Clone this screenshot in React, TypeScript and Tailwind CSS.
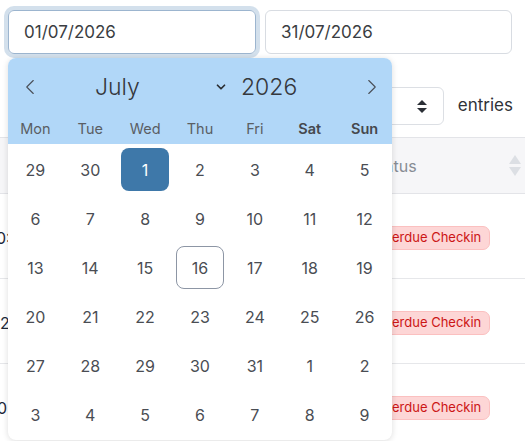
import { ChevronDown, ChevronLeft, ChevronRight } from "lucide-react"

const weekdays = ["Mon", "Tue", "Wed", "Thu", "Fri", "Sat", "Sun"]

// July 2026 grid, Monday first, padded with June / August days
const days = [
  29, 30, 1, 2, 3, 4, 5,
  6, 7, 8, 9, 10, 11, 12,
  13, 14, 15, 16, 17, 18, 19,
  20, 21, 22, 23, 24, 25, 26,
  27, 28, 29, 30, 31, 1, 2,
  3, 4, 5, 6, 7, 8, 9,
]

const rows = [
  { lead: "0:", shift: "-ml-[4px]" },
  { lead: "2", shift: "ml-0" },
  { lead: "0", shift: "-ml-[3px]" },
]

function SortArrows() {
  return (
    <svg width="12" height="22" viewBox="0 0 12 22">
      <path d="M6 0 L12 9 L0 9 Z" fill="#dcdfe4" />
      <path d="M6 21 L12 12 L0 12 Z" fill="#dcdfe4" />
    </svg>
  )
}

function SelectArrows() {
  return (
    <svg width="10" height="13" viewBox="0 0 10 13">
      <path d="M5 0 L10 5 L0 5 Z" fill="#2b2f36" />
      <path d="M5 13 L10 8 L0 8 Z" fill="#2b2f36" />
    </svg>
  )
}

function Calendar() {
  return (
    <div className="absolute left-[8px] top-[58px] w-[384px] h-[382px] rounded-[8px] bg-white shadow-[0_1px_6px_rgba(0,0,0,0.14)]">
      <div className="h-[86px] rounded-t-[8px] bg-[#b1d7f8]">
        <div className="flex items-center h-[58px]">
          <button className="w-[44px] flex justify-center text-[#4a4f57]">
            <ChevronLeft className="w-[26px] h-[26px]" strokeWidth={1} />
          </button>
          <div className="flex items-center w-[178px] pl-[43px] pr-[2px]">
            <span className="text-[23px] font-light text-[#35383d]">July</span>
            <ChevronDown className="ml-auto w-[14px] h-[14px] text-[#2b2e33]" strokeWidth={3} />
          </div>
          <span className="ml-[11px] text-[23px] font-light text-[#35383d]">2026</span>
          <button className="ml-auto w-[40px] flex justify-center text-[#4a4f57]">
            <ChevronRight className="w-[26px] h-[26px]" strokeWidth={1} />
          </button>
        </div>
        <div className="grid grid-cols-7 h-[26px] items-center">
          {weekdays.map((d, i) => (
            <span
              key={d}
              className={
                i > 4
                  ? "text-center text-[14.5px] font-semibold text-[#45484e]"
                  : "text-center text-[14.5px] text-[#5a5e64]"
              }
            >
              {d}
            </span>
          ))}
        </div>
      </div>
      <div className="grid grid-cols-7 auto-rows-[49px] pt-[1px]">
        {days.map((d, i) => {
          const selected = i === 2
          const today = i === 17
          let cell = "w-[48px] h-[43px] flex items-center justify-center rounded-[8px] text-[16px]"
          if (selected) cell += " bg-[#3e78a9] text-white"
          else if (today) cell += " border border-[#8d96a5] text-[#4a4d53]"
          else cell += " text-[#4a4d53]"
          return (
            <div key={i} className="flex items-center justify-center">
              <span className={cell}>{d}</span>
            </div>
          )
        })}
      </div>
    </div>
  )
}

export default function App() {
  return (
    <div className="relative w-[525px] h-[441px] overflow-hidden bg-white font-['Inter',sans-serif]">
      <div className="flex gap-[9px] pt-[10px] pl-[8px]">
        <div className="w-[248px] h-[44px] flex items-center px-[15px] pt-[2px] rounded-[6px] border border-[#9cb5cf] ring-4 ring-[#d3e0ec] text-[17px] text-[#3a3d42]">
          01/07/2026
        </div>
        <div className="w-[247px] h-[44px] flex items-center px-[15px] pt-[2px] rounded-[6px] border border-[#d8dce2] text-[17px] text-[#3a3d42]">
          31/07/2026
        </div>
      </div>

      <div className="flex items-center justify-end mt-[33px] pr-[12px]">
        <div className="w-[80px] h-[38px] flex items-center justify-end pr-[16px] rounded-[6px] border border-[#dcdfe4]">
          <SelectArrows />
        </div>
        <span className="ml-[14px] text-[17px] text-[#2f3238]">entries</span>
      </div>

      <div className="mt-[12px]">
        <div className="flex h-[57px] bg-[#f6f6f8] border-t border-b border-[#e3e4e8]">
          <div className="w-[357px]" />
          <div className="flex-1 flex items-center justify-between pl-[12px] pr-[4px]">
            <span className="text-[16px] text-[#878c94]">Status</span>
            <SortArrows />
          </div>
        </div>
        {rows.map((r, i) => (
          <div key={i} className="flex h-[85px] pt-[3px] border-b border-[#e6e7ea]">
            <div className="w-[357px] flex items-center">
              <span className={`${r.shift} text-[16px] text-[#1e2a3b]`}>{r.lead}</span>
            </div>
            <div className="flex-1 flex items-center pl-[9px]">
              <span className="h-[24px] flex items-center px-[8px] rounded-[7px] bg-[#fdd6d6] border border-[#fbc0c0] text-[13px] text-[#cc1515]">
                Overdue Checkin
              </span>
            </div>
          </div>
        ))}
      </div>

      <Calendar />
    </div>
  )
}
